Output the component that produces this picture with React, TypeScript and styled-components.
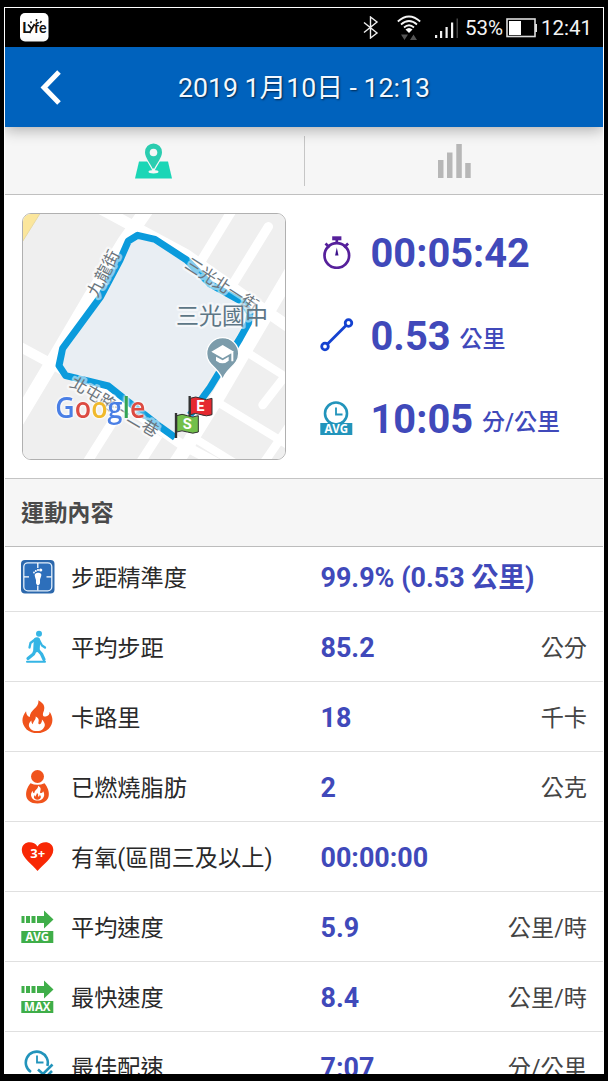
import * as React from "react"
import styled, { createGlobalStyle } from "styled-components"

const GlobalStyle = createGlobalStyle`
  * {
    box-sizing: border-box;
  }
  body {
    margin: 0;
    background: #000;
    font-family: Roboto, "Noto Sans CJK TC", sans-serif;
  }
  svg {
    display: block;
    flex: none;
  }
`

const Screen = styled.div`
  width: 600px;
  height: 1067px;
  margin: 7px 0 7px 4px;
  border: 1px solid #fff;
  border-bottom: 0;
  background: #fff;
  overflow: hidden;
  display: flex;
  flex-direction: column;
`
const StatusBar = styled.div`
  flex: none;
  height: 39px;
  padding: 0 13px 0 15px;
  background: #000;
  color: #f4f4f4;
  font-size: 20.5px;
  line-height: 40px;
  display: flex;
  align-items: center;
  justify-content: space-between;
`
const StatusGroup = styled.div`
  display: flex;
  align-items: center;
`
const StatusText = styled.span<{ $width: number }>`
  width: ${p => p.$width}px;
  white-space: nowrap;
`
const Header = styled.header`
  flex: none;
  position: relative;
  height: 80px;
  background: #0062bd;
  color: #f2f8ff;
  box-shadow: 0 3px 14px rgba(0, 0, 0, 0.3);
  display: grid;
  grid-template-columns: 92px 1fr 92px;
  align-items: center;
`
const BackButton = styled.button`
  border: 0;
  padding: 0 0 0 35px;
  background: none;
`
const Title = styled.h1`
  margin: 0;
  font-size: 26.7px;
  font-weight: 400;
  line-height: 82px;
  height: 80px;
  text-align: center;
  text-shadow: 1px 1px 2px rgba(0, 0, 0, 0.6);
  white-space: nowrap;
`
const Tabs = styled.nav`
  flex: none;
  height: 68px;
  background: #f6f6f6;
  border-bottom: 1px solid #c0c0c0;
  display: flex;
  align-items: center;
`
const Tab = styled.div`
  flex: 1;
  height: 50px;
  padding-right: 2px;
  display: flex;
  align-items: center;
  justify-content: center;

  & + & {
    padding: 0 0 0 1px;
    border-left: 1px solid #c6c6c6;
  }
`
const Summary = styled.section`
  flex: none;
  height: 283px;
  padding: 18px 0 0 17px;
  display: flex;
`
const MapCard = styled.div`
  width: 264px;
  height: 247px;
  border-radius: 9px;
  border: 1px solid #b0b0b0;
  overflow: hidden;
`
const Stats = styled.div`
  margin-top: -1px;
  padding-left: 34px;

  svg {
    margin-top: -3px;
  }
`
const Stat = styled.div`
  height: 83px;
  display: flex;
  align-items: center;
  color: #4049ba;
`
const StatValue = styled.span`
  margin-left: 16.5px;
  font-size: 39.8px;
  font-weight: 700;
  line-height: 80px;
`
const StatUnit = styled.span`
  margin-left: 9px;
  font-size: 23px;
  font-weight: 500;
`
const SectionTitle = styled.h2`
  flex: none;
  margin: 0;
  height: 69px;
  padding-left: 16px;
  background: #f6f6f6;
  border-top: 1px solid #c4c4c4;
  border-bottom: 1px solid #bcbcbc;
  color: #4a4a4a;
  font-size: 23.2px;
  font-weight: 700;
  line-height: 69px;
`
const Row = styled.div<{ $first?: boolean }>`
  flex: none;
  height: ${p => (p.$first ? 65 : 70)}px;
  padding: ${p => (p.$first ? 0 : 2)}px 16px ${p => (p.$first ? 2 : 0)}px;
  border-bottom: 1px solid #e0e0e0;
  display: grid;
  grid-template-columns: 50px 249.5px 1fr auto;
  align-items: center;
  font-size: 23.2px;
  line-height: 60px;
  white-space: nowrap;

  svg {
    margin-top: -2px;
  }
`
const Label = styled.span`
  color: #292929;
`
const Value = styled.span`
  color: #4049ba;
  font-size: 26.9px;
  font-weight: 700;
`
const Unit = styled.span`
  color: #444;
`

const Badge = ({ text, color, y }: { text: string; color: string; y: number }) => (
  <g>
    <rect x="0" y={y} width="32" height="12" fill={color} />
    <text
      x="16"
      y={y + 10.2}
      fill="#fff"
      fontFamily="Open Sans, sans-serif"
      fontSize="11.500"
      fontWeight="700"
      textAnchor="middle"
    >
      {text}
    </text>
  </g>
)

const AppLogo = () => (
  <svg width="29" height="29" viewBox="0 0 29 29">
    <rect x="0" y="0" width="28.500" height="28.500" rx="5" fill="#fff" />
    <g fontFamily="Lato, sans-serif" fontSize="16" fontWeight="700" fill="#111">
      <text x="2" y="20">L</text>
      <text x="14" y="20" textLength="12.500" lengthAdjust="spacingAndGlyphs">fe</text>
    </g>
    <path d="M8 11.500l3.500 4M14.500 11l-5 9" stroke="#111" strokeWidth="1.700" fill="none" />
    <path d="M10.500 8.500l1 1.500M16.500 6v2.500M21.500 8l-1.500 2" stroke="#111" strokeWidth="1.500" fill="none" />
  </svg>
)

const BluetoothIcon = () => (
  <svg width="16" height="23" viewBox="0 0 16 23" fill="none" stroke="#eee" strokeWidth="1.400">
    <path d="M1 6.500l13 10.500-6.500 5V1L14 6 1 16.500" />
  </svg>
)

const WifiIcon = () => (
  <svg width="24" height="25" viewBox="0 0 24 25" fill="none" stroke="#f4f4f4" strokeWidth="1.700">
    <path d="M.800 6.500Q12-3.500 23.200 6.500M4 9.500q8-7 16 0M7 12.500q5-4.500 10 0" />
    <path d="M8.500 14.500q3.500-3 7 0L12 18z" fill="#fff" stroke="none" />
    <path d="M4 19.500h7L7.500 25zM13 25h7l-3.500-5.500z" fill="#555" stroke="none" />
  </svg>
)

const SignalIcon = () => (
  <svg width="24" height="20" viewBox="0 0 24 20" fill="#f2f2f2">
    <rect x="0" y="17" width="2.200" height="3" />
    <rect x="5" y="13" width="2.200" height="7" />
    <rect x="10.500" y="9" width="2.200" height="11" />
    <rect x="16" y="4.500" width="2.200" height="15.500" />
    <rect x="21.500" y="0.500" width="1.500" height="19.500" fill="#444" />
  </svg>
)

const BatteryIcon = () => (
  <svg width="31" height="20" viewBox="0 0 31 20">
    <rect x="1" y="1" width="28" height="17.500" fill="none" stroke="#ddd" strokeWidth="1.600" />
    <rect x="3" y="3" width="12" height="14" fill="#fff" />
    <rect x="29" y="6" width="2" height="8" fill="#ddd" />
  </svg>
)

const MapTabIcon = () => (
  <svg width="37" height="36" viewBox="0 0 37 36">
    <path d="M4 18.500h29L37 35.500H0z" fill="#1bd6b6" />
    <path
      d="M18.500.500a8.500 8.500 0 0 0-8.500 8.700c0 5.300 5 10.500 8.500 18 3.500-7.500 8.500-12.700 8.500-18A8.500 8.500 0 0 0 18.500.500z"
      fill="#2bcdb0"
      stroke="#f6f6f6"
      strokeWidth="2.400"
      paintOrder="stroke"
    />
    <circle cx="18.500" cy="9.500" r="3.800" fill="#f6f6f6" />
    <path d="M17.700 25.500h1.600v2.500h-1.600z" fill="#f6f6f6" />
    <ellipse cx="18.500" cy="28.800" rx="5" ry="1.700" fill="#f6f6f6" />
  </svg>
)

const ChartTabIcon = () => (
  <svg width="33" height="34" viewBox="0 0 33 34" fill="#b7b7b7">
    <rect x="0" y="16" width="5.500" height="18" />
    <rect x="9" y="8.500" width="5.500" height="25.500" />
    <rect x="18.300" y="0" width="5.500" height="34" />
    <rect x="27.200" y="19" width="5.500" height="15" />
  </svg>
)

const StopwatchIcon = () => (
  <svg width="34" height="34" viewBox="0 0 34 34">
    <g fill="none" stroke="#56209b" strokeWidth="2.700">
      <circle cx="16.800" cy="20.500" r="12.300" />
      <path d="M16.800 4v5M5.500 8.500l4 4M28.100 8.500l-4 4" />
      <path d="M12.200 3.300h9.200" strokeWidth="4" />
    </g>
    <path d="M16.800 12.500l1.700 8h-3.400z" fill="#3c128c" />
  </svg>
)

const DistanceIcon = () => (
  <svg width="34" height="34" viewBox="0 0 34 34" fill="none" stroke="#1442d0" strokeWidth="2.800">
    <path d="M7.500 26L26 7.500" />
    <circle cx="5" cy="28.500" r="3.300" />
    <circle cx="28.500" cy="5" r="3.300" />
  </svg>
)

const PaceIcon = () => (
  <svg width="34" height="34" viewBox="0 0 34 34">
    <circle cx="16" cy="12.500" r="11" fill="none" stroke="#2294bb" strokeWidth="2.600" />
    <path d="M16 6.500v7h6.500" fill="none" stroke="#2294bb" strokeWidth="1.800" />
    <g transform="translate(.3 0)">
      <Badge text="AVG" color="#2294bb" y={22} />
    </g>
  </svg>
)

const AccuracyIcon = () => (
  <svg width="34" height="34" viewBox="0 0 34 34">
    <rect x="0" y="0" width="33.500" height="33.500" rx="4" fill="#2c68ac" />
    <rect x="2.800" y="2.800" width="28" height="28" rx="4" fill="#2d6fbb" stroke="#e3effb" strokeWidth="1.300" />
    <path d="M16.800 3v5M16.800 25.500v5M3 16.800h5M25.500 16.800h5" stroke="#fff" strokeWidth="1.300" />
    <path d="M14 14c2-2 7-2 6.300 1.500-.3 2-1.300 3-1.300 4.500 0 2.500.5 5-2 5-2.300 0-2-2.500-2-4.500 0-1.500-2-5-1-6.500z" fill="#fff" />
    <g fill="#fff">
      <circle cx="13" cy="12.500" r="0.900" />
      <circle cx="14.800" cy="11" r="1" />
      <circle cx="17" cy="10" r="1.100" />
      <circle cx="19.700" cy="10" r="1.600" />
    </g>
  </svg>
)

const WalkIcon = () => (
  <svg width="34" height="34" viewBox="0 0 34 34" fill="none" stroke="#35b5e5" strokeLinecap="round" strokeLinejoin="round">
    <circle cx="18" cy="3.800" r="3" fill="#35b5e5" stroke="none" />
    <path d="M16 10.500l-.5 8.500" strokeWidth="6.500" />
    <path d="M14 9.500l-4.500 3.500-1 4.500M18.500 11l2.500 4.500 3 2" strokeWidth="2.300" />
    <path d="M14.500 19.500l-2 4.500-5.500 4.500M16.500 19.500l4 4.500 2.500 5.500" strokeWidth="3.200" />
    <path d="M6 31.800h18" strokeWidth="2" />
  </svg>
)

const flame = "M16.500 0c7 4 6 8 4.500 12-.8 3 .3 4 2.500 3.500 2.800-.7 3.500-2 3.500-4.500 4 6 3.300 12-1 16.500-5 5-15 5.500-20.500.5C0 22 .8 16 5 10.500c.3 3 1 5 3.500 5.500C8.500 9 17.500 7 16.500 0z"
const flameInner = "M14 15.500c3.500 2 3 4 2.500 6 0 1.700 1.500 2 2.500.5.700-1 1-2 .8-3.500 3.500 3.500 3.500 6.500 1 9-3 2.800-8.500 2.800-11.500 0-2.500-2.500-2-5.500.7-8 0 1.500.3 3 1.500 3.500-.2-3 3-4 2.500-7.500z"

const FlameIcon = () => (
  <svg width="34" height="34" viewBox="0 0 34 34">
    <g transform="translate(-.3 .3) scale(1.070 1.040)">
      <path d={flame} fill="#f0531c" />
      <path d={flameInner} fill="#fff" />
    </g>
  </svg>
)

const FatIcon = () => (
  <svg width="34" height="34" viewBox="0 0 34 34">
    <circle cx="16.500" cy="6.500" r="6.500" fill="#f0531c" />
    <path d="M9.500 13.300q7 3 14 0c6.500 7.500 7 20.200-7 20.200s-13.500-12.700-7-20.200z" fill="#f0531c" />
    <g transform="translate(9.300 15.800) scale(.47)">
      <path d={flame} fill="#fff" />
      <path d={flameInner} fill="#f0531c" />
    </g>
  </svg>
)

const HeartIcon = () => (
  <svg width="34" height="34" viewBox="0 0 34 34">
    <path d="M16.500 31C12 25 .800 18 .800 10 .800 1 12.500 0 16.500 6.500 20.500 0 32.300 1 32.300 10 32.300 18 21.500 25 16.500 31z" fill="#f82805" />
    <text x="16.800" y="18.300" fill="#fff" fontFamily="Open Sans, sans-serif" fontSize="13" fontWeight="700" textAnchor="middle">
      3+
    </text>
  </svg>
)

const SpeedIcon = ({ text }: { text: string }) => (
  <svg width="34" height="34" viewBox="0 0 34 34">
    <path d="M.500 6h3v7h-3zM5 6h4v7H5zM10.500 6h4v7h-4zM16 6h7V.500l9.500 9-9.500 9V13h-7z" fill="#3fae49" />
    <g transform="translate(.3 0)">
      <Badge text={text} color="#3fae49" y={21} />
    </g>
  </svg>
)

const BestPaceIcon = () => (
  <svg width="34" height="34" viewBox="0 0 34 34" fill="none" stroke="#2294bb" strokeWidth="2.600">
    <path d="M10 22a11 11 0 1 1 16.300-6" />
    <path d="M16 5.500v7h6.500" strokeWidth="1.800" />
    <path d="M17 19.500l5 4.500 9.500-9.500M22 30l9-9" />
  </svg>
)

const route = "M495 697L450 665 345 583 295 543 230 527 167 512 147 482 158 430 272 275 330 165 355 108 383 91 435 103 530 165 600 237 700 292 720 325 715 355 690 400 600 548 540 630"

const MapLogo = styled.g`
  filter: drop-shadow(0 0 3px #fff) drop-shadow(0 0 3px #fff);
`

const RouteMap = () => (
  <svg width="264" height="247" viewBox="39 27 792 741">
    <rect x="36" y="24" width="800" height="750" fill="#efefef" />
    <path d="M36 24h55L36 112z" fill="#fbe69c" stroke="#e8d9a0" strokeWidth="3" />
    <g fill="none" stroke="#fff" strokeLinejoin="round">
      <path d="M420 0L340 115 242 275 110 500 20 650" strokeWidth="42" />
      <path d="M270 10L385 72 530 150 705 275 850 375" strokeWidth="34" />
      <path d="M20 420L140 485 345 600 510 715 640 785" strokeWidth="30" />
      <path d="M850 190L735 385 630 565 530 725 480 800" strokeWidth="42" />
      <path d="M670 10L575 165" strokeWidth="28" />
      <path d="M775 65L670 235" strokeWidth="28" strokeLinecap="round" />
      <path d="M700 435L850 530M620 590L850 730M530 685L700 790" strokeWidth="24" />
      <path d="M820 520L758 600M850 645L750 790" strokeWidth="26" strokeLinecap="round" />
      <path d="M340 600L220 790M445 690L380 790" strokeWidth="28" />
    </g>
    <path d="M383 102L435 114 530 175 600 245 695 300 704 350 495 685 295 535 175 505 157 480 168 435 282 280 362 114z" fill="#e9eef3" />
    <path d={route} fill="none" stroke="#0b9bdc" strokeWidth="21" strokeLinejoin="round" />
    <g
      fill="#6c757c"
      stroke="#fff"
      strokeOpacity="0.5"
      strokeWidth="14"
      strokeLinejoin="round"
      paintOrder="stroke"
      fontFamily="Noto Sans CJK TC, sans-serif"
      fontSize="50"
    >
      <text transform="translate(262 280) rotate(-63)">九龍街</text>
      <text transform="translate(521 186) rotate(33)">三光北一街</text>
      <text transform="translate(176 543) rotate(31)">北屯路一二巷</text>
      <text x="498" y="357" fontSize="69" fill="#5d7686">三光國中</text>
    </g>
    <path d="M638 528c-4-35-48-45-48-82a48 48 0 0 1 96 0c0 37-44 47-48 82z" fill="#7c9cab" stroke="#fff" strokeWidth="4" />
    <path d="M604 440l34-20 34 20-34 20zM618 455v12q20 16 38 0v-12l-18 11zM664 442h6v27h-6z" fill="#fff" />
    <MapLogo>
      <text
        x="136"
        y="640"
        fontFamily="Open Sans, sans-serif"
        fontSize="89"
        fontWeight="600"
        textLength="270"
        lengthAdjust="spacingAndGlyphs"
      >
        <tspan fill="#4a7fe5">G</tspan>
        <tspan fill="#dc4b42">o</tspan>
        <tspan fill="#f0b92c">o</tspan>
        <tspan fill="#4a7fe5">g</tspan>
        <tspan fill="#35a455">l</tspan>
        <tspan fill="#dc4b42">e</tspan>
      </text>
    </MapLogo>
    <g stroke="#333" strokeWidth="3" fontFamily="Roboto, sans-serif" fontSize="44" fontWeight="700">
      <path d="M541 580q16-8 32 0t33 0v49q-17 7-33 0t-32 0z" fill="#e5282f" />
      <path d="M539 573v62" strokeWidth="7" />
      <text x="559" y="619" fill="#fff" stroke="none">E</text>
      <path d="M500 632q16-8 32 0t33 0v49q-17 7-33 0t-32 0z" fill="#72bf4b" />
      <path d="M498 624v75" strokeWidth="7" />
      <text x="518" y="671" fill="#fff" stroke="none">S</text>
    </g>
  </svg>
)

interface IRecord {
  icon: React.ReactNode;
  label: string;
  value: string;
  unit?: string;
}

const records: IRecord[] = [
  { icon: <AccuracyIcon />, label: "步距精準度", value: "99.9% (0.53 公里)" },
  { icon: <WalkIcon />, label: "平均步距", value: "85.2", unit: "公分" },
  { icon: <FlameIcon />, label: "卡路里", value: "18", unit: "千卡" },
  { icon: <FatIcon />, label: "已燃燒脂肪", value: "2", unit: "公克" },
  { icon: <HeartIcon />, label: "有氧(區間三及以上)", value: "00:00:00" },
  { icon: <SpeedIcon text="AVG" />, label: "平均速度", value: "5.9", unit: "公里/時" },
  { icon: <SpeedIcon text="MAX" />, label: "最快速度", value: "8.4", unit: "公里/時" },
  { icon: <BestPaceIcon />, label: "最佳配速", value: "7:07", unit: "分/公里" },
]

const stats: IRecord[] = [
  { icon: <StopwatchIcon />, label: "time", value: "00:05:42" },
  { icon: <DistanceIcon />, label: "distance", value: "0.53", unit: "公里" },
  { icon: <PaceIcon />, label: "pace", value: "10:05", unit: "分/公里" },
]

const SignalGroup = styled(StatusGroup)`
  gap: 18px;
  margin-right: 6px;

  svg:last-child {
    margin-left: -4px;
  }
`
const BatteryGroup = styled(StatusGroup)`
  gap: 4px;
`

function App() {
  return (
    <>
      <GlobalStyle />
      <Screen>
        <StatusBar>
          <AppLogo />
          <StatusGroup>
            <SignalGroup>
              <BluetoothIcon />
              <WifiIcon />
              <SignalIcon />
            </SignalGroup>
            <BatteryGroup>
              <StatusText $width={37}>53%</StatusText>
              <BatteryIcon />
              <StatusText $width={49}>12:41</StatusText>
            </BatteryGroup>
          </StatusGroup>
        </StatusBar>
        <Header>
          <BackButton>
            <svg width="22" height="35" viewBox="0 0 22 35" fill="none" stroke="#fff" strokeWidth="5">
              <path d="M19 2L4 17.500 19 33" />
            </svg>
          </BackButton>
          <Title>2019 1月10日 - 12:13</Title>
        </Header>
        <Tabs>
          <Tab><MapTabIcon /></Tab>
          <Tab><ChartTabIcon /></Tab>
        </Tabs>
        <Summary>
          <MapCard><RouteMap /></MapCard>
          <Stats>
            {stats.map(stat => (
              <Stat key={stat.label}>
                {stat.icon}
                <StatValue>{stat.value}</StatValue>
                {stat.unit && <StatUnit>{stat.unit}</StatUnit>}
              </Stat>
            ))}
          </Stats>
        </Summary>
        <SectionTitle>運動內容</SectionTitle>
        {records.map((record, index) => (
          <Row key={record.label} $first={index === 0}>
            {record.icon}
            <Label>{record.label}</Label>
            <Value>{record.value}</Value>
            <Unit>{record.unit}</Unit>
          </Row>
        ))}
      </Screen>
    </>
  )
}

export default App
